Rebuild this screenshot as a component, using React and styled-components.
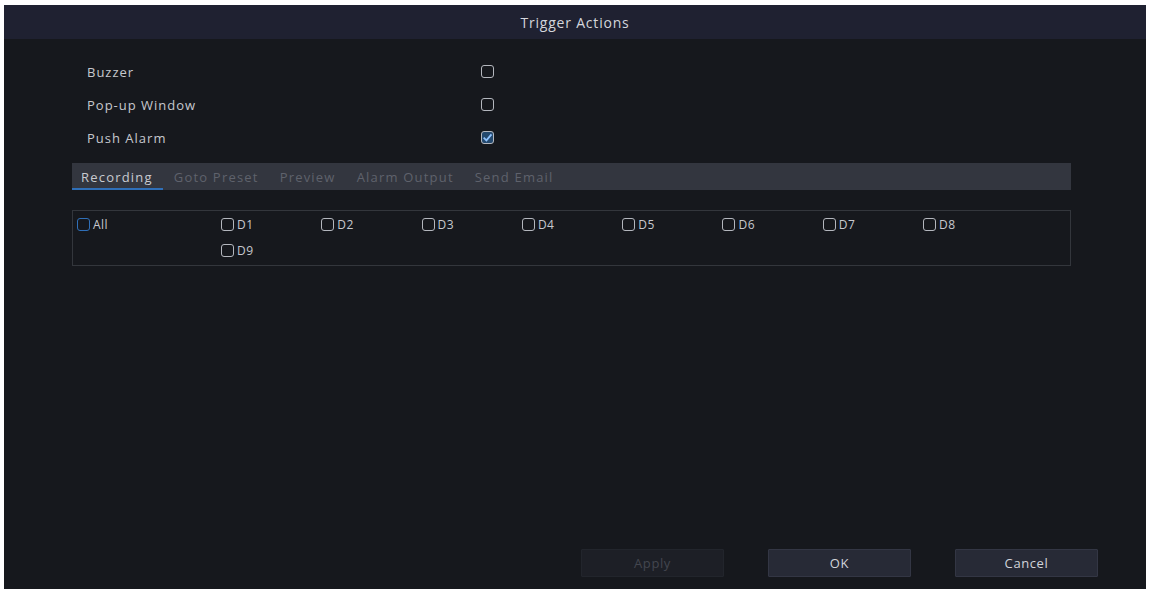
import React from "react"
import styled, { createGlobalStyle } from "styled-components"

const GlobalStyle = createGlobalStyle`
  body {
    margin: 0;
    background: #ffffff;
    font-family: "Open Sans", "Liberation Sans", sans-serif;
  }
`

const Page = styled.div`
  padding: 5px 5px 3px 4px;
`

const Dialog = styled.div`
  width: 1142px;
  height: 584px;
  background: #16181d;
  display: flex;
  flex-direction: column;
`

const Header = styled.div`
  height: 34px;
  background: #1f2131;
  color: #d4d6dc;
  font-size: 14px;
  letter-spacing: 0.8px;
  display: flex;
  align-items: center;
  justify-content: center;
`

const Body = styled.div`
  flex: 1;
  display: flex;
  flex-direction: column;
  padding: 16px 75px 0 68px;
`

const Options = styled.div`
  padding-left: 15px;
`

const OptionRow = styled.div`
  height: 33px;
  display: flex;
  align-items: center;
  color: #c6c8ce;
  font-size: 13px;
  letter-spacing: 1px;
`

const OptionLabel = styled.span`
  width: 394px;
`

const Box = styled.span`
  width: 11px;
  height: 11px;
  border: 1.6px solid ${(p) => (p.$blue ? "#2f6fb8" : "#b4b7be")};
  border-radius: 3px;
  display: inline-flex;
  align-items: center;
  justify-content: center;
  flex-shrink: 0;
  background: ${(p) => (p.$checked ? "#24496e" : "transparent")};
`

const TabBar = styled.div`
  margin-top: 9px;
  height: 27px;
  background: #33363f;
  display: flex;
  align-items: stretch;
`

const Tab = styled.div`
  padding: 2px 10px 0 9px;
  margin-right: 2px;
  display: flex;
  align-items: center;
  font-size: 13px;
  letter-spacing: 1.2px;
  color: ${(p) => (p.$active ? "#c9cbd1" : "#5f626c")};
  border-bottom: 2px solid ${(p) => (p.$active ? "#2f6fb8" : "transparent")};
`

const Channels = styled.div`
  margin-top: 20px;
  height: 56px;
  box-sizing: border-box;
  border: 1.5px solid #33363c;
  display: flex;
  padding: 2px 0 0 4px;
`

const AllCell = styled.div`
  width: 144px;
`

const ChannelList = styled.div`
  width: 810px;
  display: flex;
  flex-wrap: wrap;
`

const Channel = styled.label`
  width: 100.3px;
  height: 23px;
  display: flex;
  align-items: center;
  gap: 3px;
  color: #c6c8ce;
  font-size: 12px;
  letter-spacing: 0.5px;
`

const Footer = styled.div`
  margin-top: auto;
  padding: 0 48px 12px 0;
  display: flex;
  justify-content: flex-end;
  gap: 44px;
`

const Button = styled.button`
  width: 143px;
  height: 28px;
  font-family: inherit;
  font-size: 13px;
  letter-spacing: 0.6px;
  background: ${(p) => (p.$disabled ? "#1d1f26" : "#272a36")};
  color: ${(p) => (p.$disabled ? "#43464f" : "#d2d4da")};
  border: 1px solid ${(p) => (p.$disabled ? "#22252c" : "#333644")};
  border-radius: 1px;
`

const Check = () => (
  <svg width="11" height="11" viewBox="0 0 10 10">
    <path d="M1.5 5.2 L4 7.6 L8.6 2.2" fill="none" stroke="#8fc3ff" strokeWidth="1.6" />
  </svg>
)

const options = [
  { label: "Buzzer", checked: false },
  { label: "Pop-up Window", checked: false },
  { label: "Push Alarm", checked: true },
]

const tabs = ["Recording", "Goto Preset", "Preview", "Alarm Output", "Send Email"]
const channels = ["D1", "D2", "D3", "D4", "D5", "D6", "D7", "D8", "D9"]

const App = () => {
  return (
    <>
      <GlobalStyle />
      <Page>
        <Dialog>
          <Header>Trigger Actions</Header>
          <Body>
            <Options>
              {options.map((o) => (
                <OptionRow key={o.label}>
                  <OptionLabel>{o.label}</OptionLabel>
                  <Box $checked={o.checked}>{o.checked && <Check />}</Box>
                </OptionRow>
              ))}
            </Options>

            <TabBar>
              {tabs.map((t, i) => (
                <Tab key={t} $active={i === 0}>
                  {t}
                </Tab>
              ))}
            </TabBar>

            <Channels>
              <AllCell>
                <Channel>
                  <Box $blue />
                  All
                </Channel>
              </AllCell>
              <ChannelList>
                {channels.map((c) => (
                  <Channel key={c}>
                    <Box />
                    {c}
                  </Channel>
                ))}
              </ChannelList>
            </Channels>
          </Body>
          <Footer>
            <Button $disabled>Apply</Button>
            <Button>OK</Button>
            <Button>Cancel</Button>
          </Footer>
        </Dialog>
      </Page>
    </>
  )
}

export default App
